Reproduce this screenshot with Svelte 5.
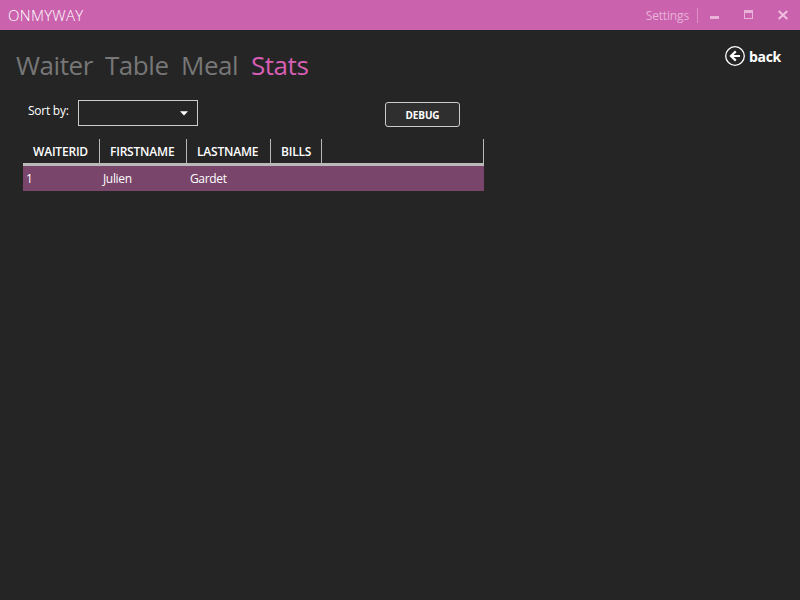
<script>
  const tabs = [
    { label: 'Waiter', width: 89 },
    { label: 'Table', width: 76 },
    { label: 'Meal', width: 70 },
    { label: 'Stats', width: 60 }
  ];
  const columns = [
    { label: 'WAITERID', width: 77, value: '1' },
    { label: 'FIRSTNAME', width: 87, value: 'Julien' },
    { label: 'LASTNAME', width: 84, value: 'Gardet' },
    { label: 'BILLS', width: 51, value: '' },
    { label: '', width: 162, value: '' }
  ];
  let active = $state('Stats');
</script>

<div class="window">
  <header class="titlebar">
    <span class="title">ONMYWAY</span>
    <div class="commands">
      <span class="settings">Settings</span>
      <svg width="102" height="30" viewBox="0 0 102 30" shape-rendering="crispEdges">
        <rect x="12" y="16" width="9" height="3" fill="#e9b2d9" />
        <path d="M46 10h9v9h-9zM47 13v5h7v-5z" fill="#e9b2d9" fill-rule="evenodd" />
        <path d="M80.7 11l8.6 8M89.3 11l-8.6 8" stroke="#edbfe0" stroke-width="2" shape-rendering="auto" />
      </svg>
    </div>
  </header>

  <div class="top">
    <nav>
      {#each tabs as tab}
        <button class="tab" class:active={active === tab.label} style="width: {tab.width}px" onclick={() => (active = tab.label)}>{tab.label}</button>
      {/each}
    </nav>
    <button class="back">
      <svg width="22" height="22" viewBox="0 0 22 22" fill="none" stroke="#fff">
        <circle cx="11" cy="11" r="9.3" stroke-width="1.3" />
        <path d="M7 11h9M11.8 6.4L7 11l4.8 4.6" stroke-width="2.2" />
      </svg>
      <span>back</span>
    </button>
  </div>

  <div class="tools">
    <span class="sort">Sort by:</span>
    <div class="combo">
      <svg width="8" height="5" viewBox="0 0 8 5"><path d="M0 0.3h8L4 4.5z" fill="#fff" /></svg>
    </div>
    <button class="debug">DEBUG</button>
  </div>

  <div class="grid">
    <div class="row head">
      {#each columns as col}
        <div class="th" style="width: {col.width}px">{col.label}</div>
      {/each}
    </div>
    <div class="row selected">
      {#each columns as col}
        <div class="td" style="width: {col.width}px">{col.value}</div>
      {/each}
    </div>
  </div>
</div>

<style>
  :global(body) { background: #252525; }
  .window {
    width: 800px;
    height: 600px;
    overflow: hidden;
    background: #252525;
    color: #fff;
    font-family: "Open Sans", "Noto Sans", sans-serif;
    font-size: 12px;
  }
  button {
    margin: 0;
    padding: 0;
    border: 0;
    background: none;
    color: inherit;
    font-family: inherit;
    text-align: left;
    white-space: nowrap;
  }
  .titlebar {
    height: 30px;
    display: flex;
    justify-content: space-between;
    background: #cb62ad;
    line-height: 31px;
  }
  .title { padding-left: 8px; font-size: 15px; font-weight: 300; letter-spacing: 0.3px; }
  .commands { display: flex; }
  .settings {
    height: 15px;
    margin-top: 8px;
    padding-right: 8px;
    border-right: 1px solid #dc92c8;
    color: #e9b2d9;
    line-height: 16px;
    letter-spacing: -0.15px;
  }
  .top { height: 70px; display: flex; justify-content: space-between; }
  nav { display: flex; padding: 16px 0 0 16px; }
  .tab { height: 38px; line-height: 38px; font-size: 26px; letter-spacing: -0.45px; color: #777; }
  .tab.active { color: #d65fb4; }
  .back {
    height: 22px;
    margin: 15px 19px 0 0;
    display: flex;
    align-items: center;
    gap: 3px;
    font-size: 14px;
    font-weight: 700;
    letter-spacing: -0.3px;
  }
  .tools { height: 39px; display: flex; align-items: flex-start; padding-left: 28px; }
  .sort { width: 50px; line-height: 21px; white-space: nowrap; letter-spacing: -0.25px; }
  .combo {
    box-sizing: border-box;
    width: 120px;
    height: 26px;
    display: flex;
    align-items: center;
    justify-content: flex-end;
    padding-right: 9px;
    border: 1px solid #ccc;
  }
  .debug {
    box-sizing: border-box;
    width: 75px;
    height: 25px;
    margin: 2px 0 0 187px;
    border: 1px solid #ccc;
    border-radius: 3px;
    background: #2f2f2f;
    font-size: 10px;
    font-weight: 700;
    line-height: 25px;
    text-align: center;
    letter-spacing: -0.15px;
  }
  .grid { width: 461px; margin-left: 23px; }
  .row { display: flex; }
  .head { height: 24px; border-bottom: 3px solid #b9b9b9; }
  .th {
    box-sizing: border-box;
    padding-left: 10px;
    border-right: 1px solid #b9b9b9;
    font-weight: 600;
    line-height: 25px;
    white-space: nowrap;
    letter-spacing: -0.2px;
  }
  .selected { height: 25px; background: #79456a; }
  .td { box-sizing: border-box; padding-left: 3px; line-height: 25px; letter-spacing: -0.35px; }
</style>
